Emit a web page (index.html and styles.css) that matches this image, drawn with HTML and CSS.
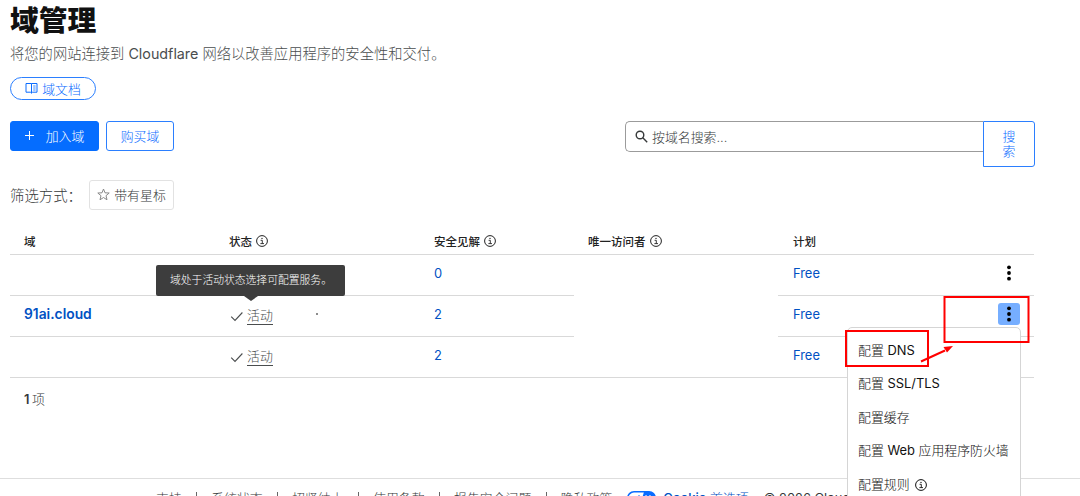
FILE: index.html
```html
<!DOCTYPE html>
<html lang="zh-CN">
<head>
  <meta charset="UTF-8" />
  <title>域管理</title>
  <link rel="stylesheet" href="styles.css">
</head>
<body>

  <svg class="defs" width="0" height="0">
    <symbol id="info" viewBox="0 0 12 12">
      <circle cx="6" cy="6" r="5.4" fill="none" stroke="currentColor"/>
      <path d="M4.6 5.3H6.3V8.6M4.4 8.6H8" fill="none" stroke="currentColor" stroke-width=".9"/>
      <circle cx="6" cy="3.4" r=".7" fill="currentColor"/>
    </symbol>
    <symbol id="check" viewBox="0 0 14 12">
      <path d="M1.2 5.6L5 9.4L12.4 1.5" fill="none" stroke="currentColor" stroke-width="1.1"/>
    </symbol>
    <symbol id="dots" viewBox="0 0 6 16">
      <circle cx="3" cy="2.3" r="1.9"/>
      <circle cx="3" cy="8" r="1.9"/>
      <circle cx="3" cy="13.7" r="1.9"/>
    </symbol>
  </svg>

  <main class="page">
    <h1>域管理</h1>
    <p class="intro">将您的网站连接到 <span class="latin">Cloudflare</span> 网络以改善应用程序的安全性和交付。</p>

    <a class="docs">
      <svg width="13" height="12" viewBox="0 0 13 12" fill="none" stroke="currentColor">
        <path d="M6.5 1.5H1V10.2H5.4L6.5 11.2L7.6 10.2H12V1.5H6.5V11"/>
        <path d="M8.2 4H10.6M8.2 6H10.6M8.2 8H10.6" stroke-width=".8"/>
      </svg>
      域文档
    </a>

    <div class="toolbar">
      <button class="btn primary">
        <svg width="9" height="9" viewBox="0 0 9 9" stroke="currentColor"><path d="M4.5 0V9M0 4.5H9"/></svg>
        加入域
      </button>
      <button class="btn">购买域</button>
      <form class="search">
        <label class="search-box">
          <svg width="13" height="13" viewBox="0 0 13 13" fill="none" stroke="#36393a" stroke-width="1.4">
            <circle cx="5" cy="5" r="3.8"/><path d="M7.8 7.8L12.2 12.2"/>
          </svg>
          <span>按域名搜索...</span>
        </label>
        <button type="button" class="search-btn">搜索</button>
      </form>
    </div>

    <div class="filter">
      <span>筛选方式：</span>
      <button class="star">
        <svg width="13" height="13" viewBox="0 0 13 13" fill="none" stroke="#8a8a8a">
          <path d="M6.5 1L8 4.8L12.2 5L9 7.7L10 11.8L6.5 9.5L3 11.8L4 7.7L.8 5L5 4.8Z"/>
        </svg>
        带有星标
      </button>
    </div>

    <div class="table">
      <div class="row head">
        <div>域</div>
        <div>状态 <svg class="info"><use href="#info"/></svg></div>
        <div>安全见解 <svg class="info"><use href="#info"/></svg></div>
        <div>唯一访问者 <svg class="info"><use href="#info"/></svg></div>
        <div class="plan">计划</div>
      </div>
      <div class="row">
        <div></div>
        <div></div>
        <div><a>0</a></div>
        <div class="blank"></div>
        <div class="plan"><a>Free</a><button class="more"><svg><use href="#dots"/></svg></button></div>
      </div>
      <div class="row">
        <div><a class="domain">91ai.cloud</a></div>
        <div class="status">
          <svg class="check"><use href="#check"/></svg><span class="state">活动</span><i class="speck"></i>
          <div class="tooltip">域处于活动状态选择可配置服务。</div>
        </div>
        <div><a>2</a></div>
        <div class="blank"></div>
        <div class="plan"><a>Free</a><button class="more active"><svg><use href="#dots"/></svg></button>
          <ul class="menu">
            <li>配置 <span class="latin">DNS</span></li>
            <li>配置 <span class="latin">SSL/TLS</span></li>
            <li>配置缓存</li>
            <li>配置 <span class="latin">Web</span> 应用程序防火墙</li>
            <li>配置规则 <svg class="info"><use href="#info"/></svg></li>
          </ul>
        </div>
      </div>
      <div class="row last">
        <div></div>
        <div class="status"><svg class="check"><use href="#check"/></svg><span class="state">活动</span></div>
        <div><a>2</a></div>
        <div class="blank"></div>
        <div class="plan"><a>Free</a><button class="more"><svg><use href="#dots"/></svg></button></div>
      </div>
    </div>
    <p class="count"><b>1</b> 项</p>
  </main>

  <footer>
    <a>支持</a><a>系统状态</a><a>招贤纳士</a><a>使用条款</a><a>报告安全问题</a><a>隐私政策</a>
    <span class="cookie">
      <svg width="29" height="14" viewBox="0 0 29 14">
        <rect x=".8" y=".8" width="27.4" height="12.4" rx="6.2" fill="#fff" stroke="#0a6cff" stroke-width="1.6"/>
        <path d="M17 .8H22A6.2 6.2 0 0 1 22 13.2H13.5Z" fill="#0a6cff"/>
        <path d="M6 7L8.5 9.5L12.5 4.5" fill="none" stroke="#0a6cff" stroke-width="1.5"/>
        <path d="M18.5 4.5L23.5 9.5M23.5 4.5L18.5 9.5" stroke="#fff" stroke-width="1.5"/>
      </svg>
      <span><b>Cookie</b> 首选项</span>
    </span>
    <span class="copyright latin">© 2026 Cloudflare</span>
  </footer>

  <!-- red markup over the menu -->
  <svg class="marks" width="1080" height="496" viewBox="0 0 1080 496">
    <g fill="none" stroke="#f00" stroke-width="2">
      <rect x="944.5" y="297" width="84" height="45"/>
      <rect x="846" y="331" width="82" height="35"/>
      <path d="M921 361.5L945 350.5"/>
    </g>
    <path d="M953 346L943.5 347L947 352.5Z" fill="#f00"/>
  </svg>

</body>
</html>
```
FILE: styles.css
```css
* {
  box-sizing: border-box;
}
body {
  margin: 0;
  height: 496px;
  overflow: hidden;
  position: relative;
  background: #fff;
  color: #36393a;
  font-family: Inter, "Noto Sans CJK SC", sans-serif;
  font-weight: 300;
  font-size: 12.9px;
}
button {
  font: inherit;
  padding: 0;
  background: #fff;
}
.defs, .marks {
  position: absolute;
  left: 0;
  top: 0;
  z-index: 2;
  pointer-events: none;
}
.latin {
  font-weight: 400;
}
.page {
  width: 1034px;
  height: 478px;
  padding-left: 10px;
}
h1 {
  margin: 0;
  height: 40px;
  font-size: 28.8px;
  line-height: 41px;
  font-weight: 800;
  color: #111;
}
.intro {
  margin: 0;
  height: 37px;
  line-height: 27px;
  font-size: 14.3px;
  color: #4a4d4e;
}
.docs {
  display: flex;
  align-items: center;
  justify-content: center;
  gap: 4px;
  width: 86px;
  height: 23px;
  padding-bottom: 1px;
  border: 1px solid #2b7fff;
  border-radius: 12px;
  color: #0a6cff;
}
.toolbar {
  display: flex;
  align-items: flex-start;
  gap: 7px;
  height: 59px;
  margin-top: 21px;
}
.btn {
  width: 68px;
  height: 30px;
  padding-bottom: 2px;
  border: 1px solid #2b7fff;
  border-radius: 3px;
  color: #0a6cff;
}
.primary {
  display: flex;
  align-items: center;
  justify-content: center;
  gap: 12px;
  width: 89px;
  background: #056dff;
  border-color: #056dff;
  color: #fff;
}
.search {
  display: flex;
  align-items: flex-start;
  width: 410px;
  margin-left: auto;
  margin-right: -1px;
}
.search-box {
  flex: 1;
  display: flex;
  align-items: center;
  gap: 4px;
  height: 31px;
  padding-left: 9px;
  border: 1px solid #9b9b9b;
  border-right: 0;
  border-radius: 5px 0 0 5px;
}
.search-btn {
  width: 52px;
  height: 46px;
  padding: 0 18px;
  line-height: 15px;
  border: 1px solid #2b7fff;
  border-radius: 0 3px 3px 0;
  color: #0a6cff;
}
.filter {
  display: flex;
  align-items: center;
  height: 30px;
  font-size: 14.4px;
}
.filter span {
  width: 79px;
  padding-bottom: 2px;
}
.star {
  display: flex;
  align-items: center;
  justify-content: center;
  gap: 4px;
  width: 85px;
  height: 30px;
  padding-bottom: 2px;
  border: 1px solid #e2e2e2;
  border-radius: 3px;
  color: #36393a;
  font-size: 12.9px;
}
.table {
  margin-top: 19px;
}
.row {
  display: grid;
  grid-template-columns: 205px 205px 154px 204px 256px;
  height: 41px;
}
.row > div {
  display: flex;
  align-items: center;
  padding: 0 14px 3px;
  border-bottom: 1px solid #d9d9d9;
}
.row > .blank {
  border-color: transparent;
}
.row.last > .blank {
  border-color: #d9d9d9;
}
.row a {
  color: #0051c3;
  font-weight: 400;
}
.row > .plan {
  position: relative;
  padding-left: 15px;
  justify-content: space-between;
}
.row.head {
  height: 26px;
}
.row.head > div {
  padding-bottom: 2px;
  font-size: 11.5px;
  font-weight: 500;
  color: #222;
}
.info {
  width: 12px;
  height: 12px;
  margin-left: 4px;
  flex: none;
}
.row .domain {
  padding-bottom: 1px;
  font-size: 13.8px;
  font-weight: 600;
}
.row > .status {
  position: relative;
  padding-bottom: 0;
  color: #4a4d4e;
}
.check {
  width: 14px;
  height: 12px;
  margin: 1px 3px 0 1px;
}
.state {
  height: 18px;
  line-height: 17px;
  border-bottom: 1px solid #4a4d4e;
}
.speck {
  width: 2px;
  height: 2px;
  margin: -4px 0 0 43px;
  border-radius: 50%;
  background: #666;
}
.tooltip {
  position: absolute;
  left: -59px;
  top: -31px;
  width: 189px;
  height: 31px;
  padding-left: 14px;
  border-radius: 2px;
  background: #3d3d3d;
  color: #fff;
  font-size: 10.8px;
  line-height: 31px;
  white-space: nowrap;
}
.tooltip::after {
  content: "";
  position: absolute;
  left: 88px;
  top: 31px;
  border: 7px solid transparent;
  border-top: 5px solid #3d3d3d;
  border-bottom: 0;
}
.more {
  display: flex;
  align-items: center;
  justify-content: center;
  width: 22px;
  height: 22px;
  margin-top: -2px;
  border: 0;
  border-radius: 3px;
  background: none;
}
.more svg {
  width: 6px;
  height: 16px;
}
.more.active {
  background: #76aeff;
}
.menu {
  position: absolute;
  z-index: 1;
  left: 69px;
  top: 31px;
  width: 174px;
  height: 190px;
  margin: 0;
  padding: 6px 0 0 10px;
  list-style: none;
  background: #fff;
  border: 1px solid #d5d5d5;
  border-radius: 5px;
  color: #111;
}
.menu li {
  height: 33.4px;
  line-height: 33.4px;
  white-space: nowrap;
}
.menu .info {
  margin-left: 2px;
  vertical-align: -2px;
}
.count {
  margin: 12px 0 0 14px;
  line-height: 20px;
  word-spacing: -1px;
}
.count b {
  font-weight: 600;
}
footer {
  display: flex;
  height: 40px;
  padding: 10px 0 0 156px;
  border-top: 1px solid #dedede;
  line-height: 20px;
  white-space: nowrap;
}
footer a {
  display: flex;
  height: 20px;
  align-items: center;
}
footer a:not(:nth-of-type(6))::after {
  content: "";
  width: 1px;
  height: 14px;
  margin: 0 14px 0 14.4px;
  background: #666;
}
.cookie {
  display: flex;
  gap: 7px;
  margin-left: 15px;
  color: #0051c3;
}
.cookie svg {
  margin-top: 2px;
}
.cookie b {
  font-weight: 500;
}
.copyright {
  width: 83px;
  margin-left: 15px;
  overflow: hidden;
}
```
